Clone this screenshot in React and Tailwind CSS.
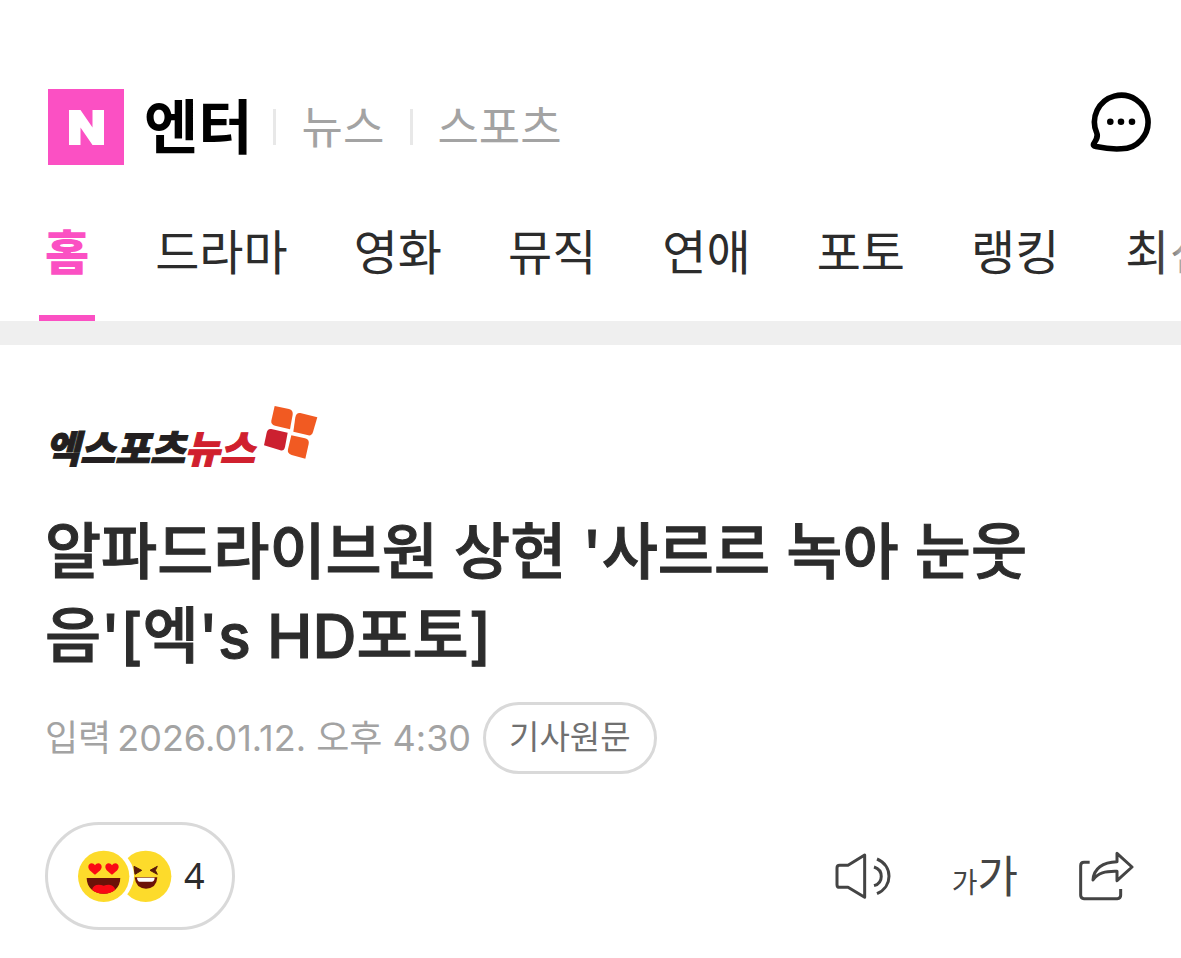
import React from 'react';

const TABS = ['홈', '드라마', '영화', '뮤직', '연애', '포토', '랭킹', '최신뉴스'];

function TalkIcon() {
  return (
    <svg className="w-[61px] h-[76px]" viewBox="0 0 61 76" fill="none" aria-hidden="true">
      <path
        d="M3.8 54.5C6 51 8.5 48 6.6 43.5A26.8 26.8 0 1 1 31 59.8C20 60.5 13 59 6 57.5C3.5 57 3 56 3.8 54.5Z"
        stroke="#000"
        strokeWidth="5.6"
        strokeLinejoin="round"
      />
      <circle cx="20.3" cy="32.7" r="3.3" fill="#000" />
      <circle cx="31" cy="32.7" r="3.3" fill="#000" />
      <circle cx="42" cy="32.7" r="3.3" fill="#000" />
    </svg>
  );
}

function PinwheelIcon() {
  return (
    <svg className="w-[55px] h-[55px]" viewBox="702 45 165 165" aria-hidden="true">
      <path d="M737 48L780 57Q793 61 791 74L783 118L738 107Q725 103 727 92Z" fill="#f15a22" />
      <path d="M814 69L865 82L852 126Q848 138 838 136L793 125L799 82Q802 67 814 69Z" fill="#f15a22" />
      <path d="M727 117L776 128L768 171Q765 184 754 181L705 166L713 128Q716 115 727 117Z" fill="#cc2030" />
      <path d="M787 136L828 145Q842 149 839 162L829 206L788 195Q774 191 777 178Z" fill="#f15a22" />
    </svg>
  );
}

function ReactionFaces() {
  return (
    <svg className="w-[94px] h-[53px]" viewBox="144 120 282 159" aria-hidden="true">
      {/* laughing face, partly behind the first one */}
      <circle cx="347" cy="199" r="77" fill="#fddb2b" />
      <path d="M312 169L335 181L315 193ZM382 169L360 181L382 193L376 181Z" stroke="#5a1a0a" strokeWidth="3" fill="#5a1a0a" strokeLinejoin="round" />
      <path d="M314 202H382Q380 235 348 236Q317 235 314 202Z" fill="#6b1208" />
      <path d="M321 203H374Q373 215 365 215H329Q322 214 321 203Z" fill="#fff" />
      <path d="M221 110A89 89 0 1 0 221 288A89 89 0 0 0 297 245Q312 222 312 199Q312 170 297 150A89 89 0 0 0 221 110Z" fill="#fff" />
      {/* heart eyes */}
      <circle cx="221" cy="199" r="77" fill="#fddb2b" />
      <path d="M195 194C181 183 175 178 175 170C175 158 190 156 195 166C200 156 215 158 215 170C215 178 209 183 195 194Z" fill="#fa0a14" />
      <path d="M246 194C232 183 226 178 226 170C226 158 241 156 246 166C251 156 266 158 266 170C266 178 260 183 246 194Z" fill="#fa0a14" />
      <path d="M170 204H271C270 234 250 251 221 251C191 251 171 234 170 204Z" fill="#6b1208" />
      <path d="M186 239Q190 224 206 224Q214 224 221 227Q228 224 237 224Q252 225 256 239Q242 251 221 251Q199 251 186 239Z" fill="#fa0a14" />
    </svg>
  );
}

function SpeakerIcon() {
  return (
    <svg className="w-[58px] h-[48px]" viewBox="66 50 174 144" fill="none" stroke="#444" strokeWidth="9" aria-hidden="true">
      <path d="M158 59V186L108 156H83Q75 156 75 148V98Q75 90 83 90H108Z" strokeLinejoin="round" />
      <path d="M186 95C215 104 215 143 186 151" />
      <path d="M195 71C243 91 243 154 195 175" />
    </svg>
  );
}

function ShareIcon() {
  return (
    <svg className="w-[56px] h-[50px]" viewBox="805 48 168 150" fill="none" stroke="#444" strokeWidth="9" aria-hidden="true">
      <path d="M840 82H823Q813 82 813 92V181Q813 191 823 191H923Q933 191 933 181V162" />
      <path d="M922 55L967 96L922 137V109C886 108 865 114 850 135C852 101 879 81 922 80Z" strokeLinejoin="round" />
    </svg>
  );
}

function Header() {
  return (
    <header className="pt-[89px]">
      <div className="flex items-center pl-12 pr-[30px]">
        <a href="#naver" aria-label="NAVER" className="flex w-[76px] h-[76px] items-center justify-center bg-[#fb50c3]">
          <svg className="w-[35px] h-[35px]" viewBox="0 0 35 35" fill="#fff" aria-hidden="true">
            <path d="M0 0H11.5L23.5 17.5V0H35V35H23.5L11.5 17.5V35H0Z" />
          </svg>
        </a>
        <a href="#enter" className="ml-5 pt-[2px] text-[59px] leading-[74px] font-bold text-black">엔터</a>
        <span className="ml-5 h-9 w-[3px] bg-[#e8e8e8]" />
        <a href="#news" className="ml-[26px] pt-[2px] text-[45px] leading-[74px] text-[#a3a3a3]">뉴스</a>
        <span className="ml-[26px] h-9 w-[3px] bg-[#e8e8e8]" />
        <a href="#sports" className="ml-6 pt-[2px] text-[45px] leading-[74px] text-[#a3a3a3]">스포츠</a>
        <button type="button" aria-label="톡" className="ml-auto">
          <TalkIcon />
        </button>
      </div>

      <nav className="relative mt-[18px] h-[138px]">
        <ul className="flex h-full gap-[54px] overflow-hidden pl-[39px] text-[48px] whitespace-nowrap">
          {TABS.map((tab, i) => (
            <li key={tab} className="h-full shrink-0">
              <a
                href={`#tab-${i}`}
                className={`relative flex h-full items-center px-[6px] pt-[2px] ${i === 0 ? 'font-black text-[#fb50c3]' : 'text-[#2c2c2c]'}`}
              >
                {tab}
                {i === 0 && <span className="absolute inset-x-0 bottom-0 h-[6px] bg-[#fb50c3]" />}
              </a>
            </li>
          ))}
        </ul>
        <div className="pointer-events-none absolute inset-y-0 right-0 w-6 bg-gradient-to-r from-white/0 to-white/60" />
      </nav>
    </header>
  );
}

export default function App() {
  return (
    <div className={`min-h-screen overflow-x-hidden bg-white font-["Inter","Noto_Sans_CJK_KR",sans-serif]`}>
      <Header />
      <div className="h-6 bg-[#efefef]" />

      <main className="px-[45px] pt-[60px]">
        <a href="#press" className="flex h-[66px] w-fit items-start">
          <span className="mt-[22px] text-[38px] leading-[44px] font-black italic text-[#231f20] [-webkit-text-stroke:1px_currentColor]">
            엑스포츠<span className="text-[#d0202e]">뉴스</span>
          </span>
          <span className="ml-2"><PinwheelIcon /></span>
        </a>

        <h1 className="mt-[39px] text-[61px] leading-[84px] font-medium break-all text-[#2c2c2c] [-webkit-text-stroke:1px_currentColor]">
          알파드라이브원 상현 '사르르 녹아 눈웃음'[엑's HD포토]
        </h1>

        <div className="mt-6 flex items-center">
          <p className="flex gap-[6px] text-[36px] leading-[72px] text-[#a3a3a3]">
            <span>입력</span>
            <time dateTime="2026-01-12T16:30">2026.01.12. 오후 4:30</time>
          </p>
          <button type="button" className="ml-3 h-[72px] rounded-full border-[3px] border-[#d9d9d9] px-[23px] text-[33px] text-[#707070]">
            기사원문
          </button>
        </div>

        <div className="mt-12 flex items-center justify-between">
          <button
            type="button"
            aria-label="공감 4"
            className="flex h-[108px] items-center gap-3 rounded-full border-[3px] border-[#d9d9d9] pl-[30px] pr-[27px]"
          >
            <ReactionFaces />
            <span className={`font-["Noto_Sans"] text-[36px] text-[#2c2c2c]`}>4</span>
          </button>
          <div className="flex items-center gap-[60px] pr-[2px]">
            <button type="button" aria-label="본문 듣기"><SpeakerIcon /></button>
            <button type="button" aria-label="글자 크기" className="flex items-baseline pt-[2px] leading-none text-[#444]">
              <span className="text-[28px]">가</span>
              <span className="text-[44px]">가</span>
            </button>
            <button type="button" aria-label="공유하기"><ShareIcon /></button>
          </div>
        </div>
      </main>
    </div>
  );
}
